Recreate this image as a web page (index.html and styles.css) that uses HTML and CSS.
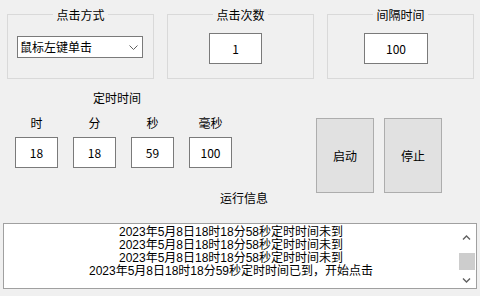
FILE: index.html
```html
<!DOCTYPE html>
<html lang="zh-CN">
<head>
<meta charset="utf-8">
<title>定时点击</title>
<link rel="stylesheet" href="styles.css">
</head>
<body>
<div class="app">
  <div class="top-row">
    <fieldset class="group">
      <legend>点击方式</legend>
      <div class="group-body">
        <div class="combo">
          <span class="combo-text">鼠标左键单击</span>
          <svg class="combo-arrow" width="9" height="5" viewBox="0 0 9 5"><path d="M0.5 0.5 L4.5 4.5 L8.5 0.5" fill="none" stroke="#606060" stroke-width="1"/></svg>
        </div>
      </div>
    </fieldset>
    <fieldset class="group">
      <legend>点击次数</legend>
      <div class="group-body">
        <div class="field field-count">1</div>
      </div>
    </fieldset>
    <fieldset class="group">
      <legend>间隔时间</legend>
      <div class="group-body">
        <div class="field field-interval">100</div>
      </div>
    </fieldset>
  </div>

  <div class="mid-row">
    <div class="timer">
      <div class="timer-title">定时时间</div>
      <div class="timer-cols">
        <div class="tcol"><span class="tlabel">时</span><div class="field tfield">18</div></div>
        <div class="tcol"><span class="tlabel">分</span><div class="field tfield">18</div></div>
        <div class="tcol"><span class="tlabel">秒</span><div class="field tfield">59</div></div>
        <div class="tcol"><span class="tlabel">毫秒</span><div class="field tfield">100</div></div>
      </div>
    </div>
    <div class="buttons">
      <div class="btn">启动</div>
      <div class="btn">停止</div>
    </div>
  </div>

  <div class="log-title">运行信息</div>
  <div class="log">
    <div class="log-text">
      <div class="log-line">2023年5月8日18时18分58秒定时时间未到</div>
      <div class="log-line">2023年5月8日18时18分58秒定时时间未到</div>
      <div class="log-line">2023年5月8日18时18分58秒定时时间未到</div>
      <div class="log-line">2023年5月8日18时18分59秒定时时间已到，开始点击</div>
    </div>
    <div class="sb">
      <svg class="sb-up" width="9" height="5" viewBox="0 0 9 5"><path d="M1 4.5 L4.5 1 L8 4.5" fill="none" stroke="#606060" stroke-width="1.4"/></svg>
      <div class="sb-space"></div>
      <div class="sb-thumb"></div>
      <svg class="sb-down" width="9" height="5" viewBox="0 0 9 5"><path d="M1 0.5 L4.5 4 L8 0.5" fill="none" stroke="#606060" stroke-width="1.4"/></svg>
    </div>
  </div>
</div>
</body>
</html>
```

FILE: styles.css
```css
html, body {
  margin: 0;
  padding: 0;
}
body {
  width: 480px;
  height: 296px;
  overflow: hidden;
  background: #f0f0f0;
  font-family: "Noto Sans CJK SC", "Noto Sans", sans-serif;
  font-size: 12px;
  color: #000;
}
.app {
  display: flex;
  flex-direction: column;
}

/* top group boxes */
.top-row {
  display: flex;
  gap: 13px;
  padding-left: 7px;
  margin-top: 6px;
}
.group {
  width: 147px;
  box-sizing: border-box;
  margin: 0;
  padding: 0;
  border: 1px solid #d9d9d9;
  min-width: 0;
}
.group legend {
  margin: 0 auto;
  padding: 2px 3px 0;
  line-height: 14px;
  font-size: 12px;
}
.group-body {
  height: 56px;
  display: flex;
  align-items: flex-start;
}

.combo {
  margin: 14px 0 0 9px;
  width: 126px;
  height: 22px;
  box-sizing: border-box;
  border: 1px solid #7a7a7a;
  background: #fff;
  display: flex;
  align-items: center;
  justify-content: space-between;
  padding: 0 4px 0 2px;
}
.combo-text {
  line-height: 14px;
}
.combo-arrow {
  margin-top: 1px;
}

.field {
  box-sizing: border-box;
  height: 31px;
  border: 1px solid #7a7a7a;
  background: #fff;
  display: flex;
  align-items: center;
  justify-content: center;
  line-height: 14px;
}
.field-count {
  margin: 11px 0 0 41px;
  width: 53px;
}
.field-interval {
  margin: 11px 0 0 36px;
  width: 64px;
}

/* middle */
.mid-row {
  display: flex;
  align-items: flex-start;
  margin-top: 12px;
}
.timer {
  display: flex;
  flex-direction: column;
  padding-left: 15px;
}
.timer-title {
  line-height: 14px;
  margin-left: 78px;
}
.timer-cols {
  display: flex;
  gap: 15px;
  margin-top: 11px;
}
.tcol {
  width: 43px;
  display: flex;
  flex-direction: column;
  align-items: center;
}
.tlabel {
  line-height: 14px;
}
.tfield {
  width: 43px;
  margin-top: 7px;
}

.buttons {
  display: flex;
  gap: 10px;
  margin-left: auto;
  margin-right: 38px;
  margin-top: 27px;
}
.btn {
  width: 58px;
  height: 75px;
  box-sizing: border-box;
  border: 1px solid #adadad;
  background: #e1e1e1;
  display: flex;
  align-items: center;
  justify-content: center;
  line-height: 14px;
}

/* log */
.log-title {
  margin-top: -2px;
  margin-left: 220px;
  line-height: 14px;
}
.log {
  margin: 18px 3px 0;
  height: 66px;
  box-sizing: border-box;
  border: 1px solid #a0a0a0;
  background: #fff;
  display: flex;
}
.log-text {
  flex: 1;
  padding-top: 2px;
  text-align: center;
  font-family: "Liberation Sans", "Noto Sans CJK SC", sans-serif;
  font-size: 12px;
  line-height: 13px;
  white-space: nowrap;
}
.sb {
  width: 17px;
  margin-right: 1px;
  display: flex;
  flex-direction: column;
  align-items: center;
}
.sb-up {
  margin-top: 11px;
  flex: none;
}
.sb-space {
  height: 13px;
  flex: none;
}
.sb-thumb {
  width: 16px;
  height: 17px;
  background: #cdcdcd;
  flex: none;
}
.sb-down {
  margin-top: 8px;
  flex: none;
}
```
